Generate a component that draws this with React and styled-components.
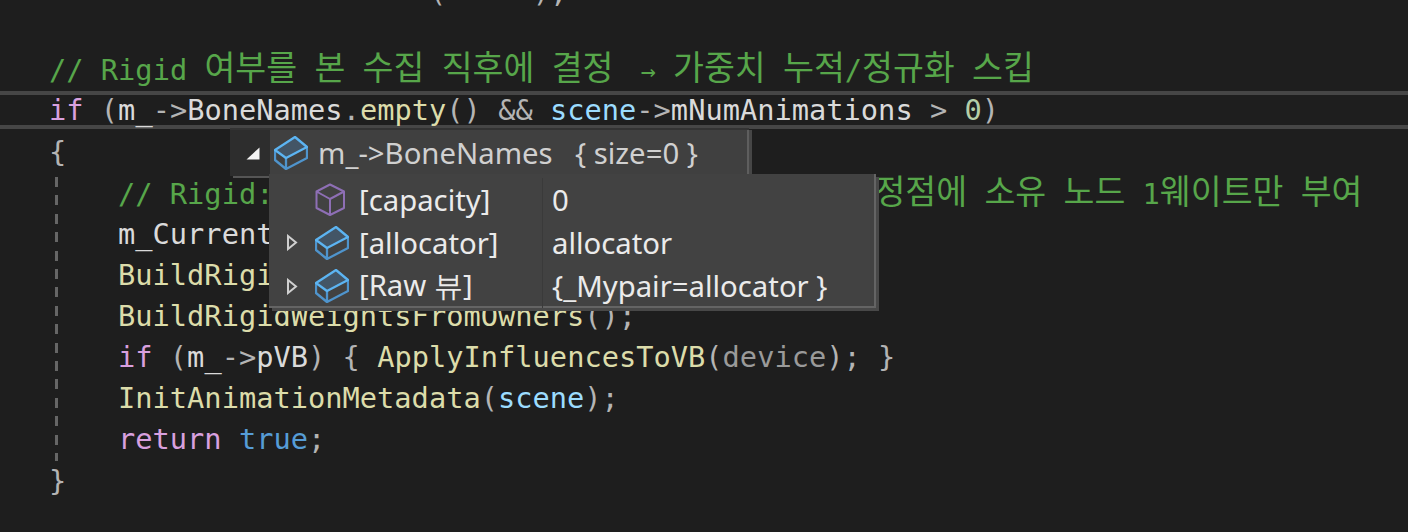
import React from 'react'
import styled, { createGlobalStyle } from 'styled-components'

const GlobalStyle = createGlobalStyle`
    html, body {
        margin: 0;
        padding: 0;
        background: #1e1e1e;
    }
`

const Editor = styled.div`
    position: relative;
    width: 1408px;
    height: 532px;
    overflow: hidden;
    background: #1e1e1e;
    color: #dadada;
    font-family: "DejaVu Sans Mono", monospace;
    font-size: 28.7px;
`
const Lines = styled.div`
    margin-top: -33px;
    padding-left: 49px;
`
const Line = styled.div`
    height: 41.14px;
    line-height: 41.14px;
    white-space: pre;
`
const ScrolledLine = styled(Line)`
    line-height: 50px;
`
const CurrentLine = styled(Line)`
    position: relative;
    isolation: isolate;
    &::before {
        content: '';
        position: absolute;
        z-index: -1;
        left: -49px;
        right: 0;
        top: 0.5px;
        height: 30px;
        border-top: 4px solid #464646;
        border-bottom: 4px solid #464646;
    }
`
const Block = styled.div`
    padding-left: 69px;
    background-image: repeating-linear-gradient(to bottom, transparent 0 4px, #666666 4px 14px, transparent 14px 18.4px);
    background-size: 3px 100%;
    background-repeat: no-repeat;
    background-position: 6px 0;
`
const Comment = styled.span`color: #57a64a;`
const Ko = styled.span`
    font-family: "Noto Sans CJK KR", sans-serif;
    font-size: 33.6px;
    line-height: 1;
`
const Arrow = styled.span`
    display: inline-block;
    width: 25px;
    text-align: right;
    font-size: 25px;
    line-height: 1;
`
const Keyword = styled.span`color: #d8a0df;`
const Fn = styled.span`color: #dcdcaa;`
const Param = styled.span`color: #9a9a9a;`
const Local = styled.span`color: #9cdcfe;`
const Lit = styled.span`color: #569cd6;`
const Num = styled.span`color: #b5cea8;`
const Punct = styled.span`color: #b4b4b4;`
const Gap = styled.span`
    display: inline-block;
    width: ${p => p.$w}px;
`

const Tip = styled.div`
    position: absolute;
    left: 230px;
    top: 130px;
    width: 517px;
    height: 46px;
    display: flex;
    background: #404040;
    border-right: 2px solid #5e5e5e;
    box-shadow: 3px 0 0 #464646, 0 -2px 0 #333333;
    font-family: "Noto Sans", sans-serif;
    font-size: 29.3px;
`
const Gutter = styled.div`
    width: 40px;
    flex: none;
    box-sizing: border-box;
    padding-left: 6px;
    display: flex;
    align-items: center;
    justify-content: center;
    background: #2d2d2d;
    box-shadow: 3px 2px 0 #555555;
`
const HeadRow = styled.div`
    flex: 1;
    display: flex;
    align-items: center;
    gap: 10px;
    padding-left: 4px;
    background: #404040;
    color: #d0d0d0;
    white-space: pre;
`
const HeadName = styled.span`
    width: 247px;
    flex: none;
`
const Children = styled.div`
    position: absolute;
    left: 39px;
    top: 44px;
    width: 607px;
    height: 134px;
    display: grid;
    grid-template-columns: 274px 1fr;
    grid-auto-rows: 43.3px;
    padding-top: 4px;
    box-sizing: border-box;
    background: #424242;
    border-right: 2px solid #646464;
    border-bottom: 2px solid #646464;
    box-shadow: 3px 3px 0 #484848;
    color: #ebebeb;
`
const NameCell = styled.div`
    display: grid;
    grid-template-columns: 46px 44px 1fr;
    align-items: center;
    white-space: pre;
    border-right: 1px solid #3a3a3a;
`
const ValueCell = styled.div`
    display: flex;
    align-items: center;
    padding-left: 9px;
    white-space: pre;
`
const Expander = styled.svg`
    justify-self: end;
    margin-right: 17px;
`
const BoxIcon = styled.svg`
    flex: none;
`

const Caret = () => (
    <svg width="14" height="13" viewBox="0 0 14 13">
        <path d="M0.5 12.5 L13.5 0.5 V12.5 Z" fill="#f4f4f4" />
    </svg>
)

const Closed = () => (
    <Expander width="12" height="17" viewBox="0 0 12 17">
        <path d="M2 2 L10 8.5 L2 15 Z" fill="none" stroke="#cfcfcf" strokeWidth="2" />
    </Expander>
)

const BlueBox = () => (
    <BoxIcon width="34" height="34" viewBox="0 0 34 34">
        <path d="M1 14 L21 1 L33 11 L12 22 Z" fill="#435566" />
        <path d="M1 14 V24 L12 33 L33 22 V11 M12 22 V33" fill="none" stroke="#4f94cc" strokeWidth="2.3" strokeLinejoin="round" />
        <path d="M1 14 L21 1 L33 11 L12 22 Z" fill="none" stroke="#5cb4f2" strokeWidth="2.3" strokeLinejoin="round" />
    </BoxIcon>
)

const PurpleBox = () => (
    <BoxIcon width="30" height="33" viewBox="0 0 30 33">
        <path d="M15 1.5 L29 8.5 V25 L15 32 L1.5 25 V8.5 Z M1.5 8.5 L15 16 L29 8.5 M15 16 V32" fill="none" stroke="#8e6fb5" strokeWidth="2" strokeLinejoin="round" />
    </BoxIcon>
)

const rows = [
    { icon: <PurpleBox />, name: '[capacity]', value: '0' },
    { open: true, icon: <BlueBox />, name: '[allocator]', value: 'allocator' },
    { open: true, icon: <BlueBox />, name: <>[Raw 뷰]</>, value: '{_Mypair=allocator }' },
]

const App = () => {
    return (
        <Editor>
            <GlobalStyle />
            <Lines>
                <ScrolledLine>{' '.repeat(22)}<Punct>(</Punct>{'     '}<Punct>)</Punct><Punct>;</Punct></ScrolledLine>
                <Line> </Line>
                <Line><Comment>// Rigid <Ko>여부를</Ko> <Ko>본</Ko> <Ko>수집</Ko> <Ko>직후에</Ko> <Ko>결정</Ko> <Arrow>→</Arrow> <Ko>가중치</Ko> <Ko>누적</Ko>/<Ko>정규화</Ko> <Ko>스킵</Ko></Comment></Line>
                <CurrentLine>
                    <Keyword>if</Keyword> <Punct>(</Punct>m_<Punct>-&gt;</Punct>BoneNames<Punct>.</Punct><Fn>empty</Fn><Punct>()</Punct> <Punct>&amp;&amp;</Punct> <Local>scene</Local><Punct>-&gt;</Punct>mNumAnimations <Punct>&gt;</Punct> <Num>0</Num><Punct>)</Punct>
                </CurrentLine>
                <Line><Punct>{'{'}</Punct></Line>
                <Block>
                    <Line><Comment>// Rigid:<Gap $w={601} /><Ko>정점에</Ko> <Ko>소유</Ko> <Ko>노드</Ko> 1<Ko>웨이트만</Ko> <Ko>부여</Ko></Comment></Line>
                    <Line>m_Current</Line>
                    <Line><Fn>BuildRigi</Fn></Line>
                    <Line><Fn>BuildRigidWeightsFromOwners</Fn><Punct>();</Punct></Line>
                    <Line><Keyword>if</Keyword> <Punct>(</Punct>m_<Punct>-&gt;</Punct>pVB<Punct>)</Punct> <Punct>{'{'}</Punct> <Fn>ApplyInfluencesToVB</Fn><Punct>(</Punct><Param>device</Param><Punct>);</Punct> <Punct>{'}'}</Punct></Line>
                    <Line><Fn>InitAnimationMetadata</Fn><Punct>(</Punct><Local>scene</Local><Punct>);</Punct></Line>
                    <Line><Keyword>return</Keyword> <Lit>true</Lit><Punct>;</Punct></Line>
                </Block>
                <Line><Punct>{'}'}</Punct></Line>
            </Lines>
            <Tip>
                <Gutter><Caret /></Gutter>
                <HeadRow>
                    <BlueBox />
                    <HeadName>m_-&gt;BoneNames</HeadName>
                    <span>{'{ size=0 }'}</span>
                </HeadRow>
                <Children>
                    {rows.map((row, index) => (
                        <React.Fragment key={index}>
                            <NameCell>
                                {row.open ? <Closed /> : <span />}
                                {row.icon}
                                <span>{row.name}</span>
                            </NameCell>
                            <ValueCell>{row.value}</ValueCell>
                        </React.Fragment>
                    ))}
                </Children>
            </Tip>
        </Editor>
    )
}

export default App
